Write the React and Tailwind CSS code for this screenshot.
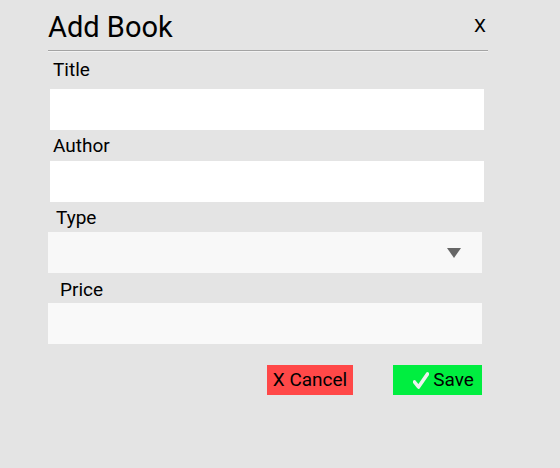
export default function App() {
  const font = { fontFamily: "Roboto, 'Noto Sans', sans-serif" };
  return (
    <div className="w-[560px] h-[468px] bg-[#e4e4e4] text-black overflow-hidden" style={font}>
      <div className="ml-[48px] w-[440px] flex flex-col">
        <div className="h-[50px] flex justify-between items-start">
          <div className="pt-[10px] text-[29px] leading-[34px]">Add Book</div>
          <div className="pt-[15px] mr-[2px] text-[19px] leading-[22px]">X</div>
        </div>
        <div className="h-[1px] bg-[#a4a4a4]" />
        <div className="h-[1px] bg-[#f2f2f2]" />

        <div className="h-[37px] pt-[7px] pl-[5px] text-[19px] leading-[22px]">Title</div>
        <div className="ml-[2px] w-[434px] h-[41px] bg-white" />

        <div className="h-[31px] pt-[5px] pl-[5px] text-[19px] leading-[22px]">Author</div>
        <div className="ml-[2px] w-[434px] h-[41px] bg-white" />

        <div className="h-[30px] pt-[5px] pl-[8px] text-[19px] leading-[22px]">Type</div>
        <div className="w-[434px] h-[41px] bg-[#f8f8f8] flex items-center justify-end pr-[21px]">
          <svg width="14" height="10" viewBox="0 0 14 10">
            <polygon points="0,0 14,0 7,10" fill="#666666" />
          </svg>
        </div>

        <div className="h-[30px] pt-[6px] pl-[12px] text-[19px] leading-[22px]">Price</div>
        <div className="w-[434px] h-[41px] bg-[#f9f9f9]" />

        <div className="mt-[21px] flex justify-end gap-[40px] mr-[6px]">
          <div className="w-[86px] h-[30px] bg-[#ff4848] flex items-center justify-center text-[19px] leading-[22px]">
            X Cancel
          </div>
          <div className="w-[89px] h-[30px] bg-[#00ee40] flex items-center justify-center gap-[4px] pl-[12px] text-[19px] leading-[22px]">
            <svg width="16" height="17" viewBox="0 0 16 17">
              <path d="M1.5 10 L5.5 15 L14.5 2" fill="none" stroke="#eef2ee" strokeWidth="3.6" strokeLinecap="round" strokeLinejoin="round" />
            </svg>
            <span>Save</span>
          </div>
        </div>
      </div>
    </div>
  );
}
